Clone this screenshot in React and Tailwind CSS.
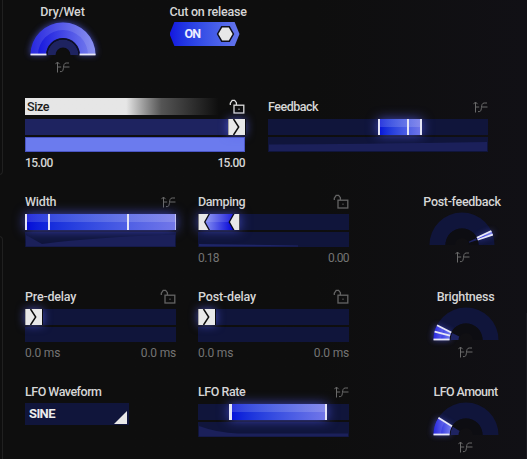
import React, { useId } from "react";
import clsx from "clsx";

const ModIcon = ({ className }) => (
  <svg
    width="15"
    height="12"
    viewBox="0 0 15 12"
    fill="none"
    stroke="currentColor"
    className={clsx("shrink-0 text-[#6a6a6a]", className)}
  >
    <path d="M2.5 11.5V1.2M0.4 3.2L2.5 1L4.6 3.2M2.5 6H6.2M9 6H14.5" />
    <path d="M5 10.6H6.3C9.8 10.6 7 2 11.2 2H14" />
  </svg>
);

const LockIcon = ({ active }) => (
  <svg
    width="16"
    height="15"
    viewBox="0 0 16 15"
    fill="none"
    stroke="currentColor"
    strokeWidth="1.3"
    className={clsx("shrink-0", active ? "text-[#dcdcdc]" : "text-[#646464]")}
  >
    <path d="M1.3 6V4.2L3.2 1.3H5.6L7.4 3.6V6" />
    <rect x="5" y="6.2" width="9.8" height="7.8" />
    <rect x="9.4" y="9.6" width="1.2" height="1.2" fill="currentColor" stroke="none" />
  </svg>
);

const Label = ({ children, className }) => (
  <span
    className={clsx(
      "block whitespace-nowrap text-[12.5px] font-medium leading-[17px]",
      className
    )}
  >
    {children}
  </span>
);

const Slider = ({ label, icon, wide, header, values, bright, track, shape, lower }) => (
  <div className={wide ? "w-[220px]" : "w-[151px]"}>
    <div className={clsx("flex h-[17px] items-center justify-between", header)}>
      {label}
      {icon}
    </div>
    <div className={clsx("mt-1 flex h-4", bright ? "bg-[#1e2360]" : "bg-[#10153b]")}>{track}</div>
    <div className={clsx("mt-0.5 h-[15px]", lower || "bg-[#10153b]")}>{shape}</div>
    {values && (
      <div
        className={clsx(
          "mt-0.5 flex h-[17px] items-center justify-between text-[12px]",
          bright ? "font-medium text-[#d6d6d6]" : "text-[#747474]"
        )}
      >
        {values.map((value, index) => (
          <span key={index} className={value.includes("ms") ? "tracking-[-0.2px]" : "tracking-[-0.6px]"}>
            {value}
          </span>
        ))}
      </div>
    )}
  </div>
);

const Thumb = ({ className }) => (
  <svg
    width="18"
    height="16"
    viewBox="0 0 18 16"
    className={clsx("shrink-0 shadow-[0_0_10px_rgba(90,100,240,0.7)]", className)}
  >
    <rect width="18" height="16" fill="#0a0a10" />
    <rect x="0.3" width="16.7" height="16" fill="#e8e8e8" />
    <path d="M5.5 0L10.7 8L5.5 16" fill="none" stroke="#0c0c0c" strokeWidth="1.5" />
  </svg>
);

// lit part of a track, brighter in the top half
const Fill = ({ className, children }) => (
  <div
    className={clsx(
      "flex h-4 bg-linear-to-r from-[#0505d8] to-[#7377e9] shadow-[0_0_12px_rgba(80,90,240,0.75)]",
      className
    )}
  >
    <div className="flex h-full w-full bg-linear-to-b from-white/15 from-50% to-transparent to-50%">
      {children}
    </div>
  </div>
);

const Mark = ({ className }) => (
  <i className={clsx("h-full shrink-0 bg-[#e4e4f6]", className || "w-0.5")} />
);

const point = (angle, radius) => {
  const rad = (angle * Math.PI) / 180;
  return [35 - radius * Math.cos(rad), 35 - radius * Math.sin(rad)];
};

const wedge = (from, to, inner, outer) => {
  const [ax, ay] = point(from, outer);
  const [bx, by] = point(to, outer);
  const [cx, cy] = point(to, inner);
  const [dx, dy] = point(from, inner);
  return `M${ax} ${ay}A${outer} ${outer} 0 0 1 ${bx} ${by}L${cx} ${cy}A${inner} ${inner} 0 0 0 ${dx} ${dy}Z`;
};

// angles run clockwise from the left end, 0 to 180
const Dial = ({ label, from, to, marks, className }) => {
  const id = useId();
  const full = to - from === 180;

  return (
    <div className={clsx("flex w-[70px] flex-col items-center", className)}>
      {label}
      <svg width="70" height="36" viewBox="0 0 70 36" className="overflow-visible">
        <defs>
          <linearGradient id={id}>
            <stop offset="0" stopColor="#0b0bdc" />
            <stop offset="1" stopColor="#7b83ef" />
          </linearGradient>
          <filter id={`${id}glow`} x="-60%" y="-60%" width="220%" height="220%">
            <feGaussianBlur stdDeviation="3.2" />
          </filter>
        </defs>
        <path d={wedge(0, 180, 16.5, 32.5)} fill="#10153b" />
        <path d={wedge(from, to, 16, 33)} fill="#5059e8" opacity="0.7" filter={`url(#${id}glow)`} />
        <path d={wedge(0, 180, 7, 16.5)} fill="#0d0d12" />
        <path d={wedge(from, to, 7.5, 15.5)} fill="#1e2360" />
        <path d={wedge(from, to, 16.5, 32.5)} fill={`url(#${id})`} />
        <path d={wedge(from, to, 25, 32.5)} fill="#fff" opacity="0.12" />
        {full && <path d={wedge(0, 180, 15.5, 17)} fill="#0c0e2a" />}
        {marks.map((angle) => {
          const lift = angle === 0 || angle === 180 ? 0.5 : 0;
          const [x1, y1] = point(angle, 16.5);
          const [x2, y2] = point(angle, 32.5);
          return (
            <line
              key={angle}
              x1={x1}
              y1={y1 - lift}
              x2={x2}
              y2={y2 - lift}
              stroke="#e8e8f6"
              strokeWidth="1.8"
            />
          );
        })}
      </svg>
      <ModIcon className="mt-[5px]" />
    </div>
  );
};

const Toggle = () => (
  <div className="w-[70px]">
    <Label className="tracking-[-0.22px] text-[#d6d6d6]">Cut on release</Label>
    <div className="mt-[2px] flex h-[24px] items-center justify-between bg-linear-to-r from-[#1515e0] to-[#6676ec] pr-[5px] pl-[15px] [clip-path:polygon(7%_0,93%_0,100%_50%,93%_100%,7%_100%,0_50%)]">
      <span className="text-[12.5px] font-bold tracking-[-0.9px] text-[#eeeeff]">ON</span>
      <svg width="19" height="18" viewBox="0 0 19 18">
        <path
          d="M5.7 1.8H13.3L17.4 9L13.3 16.2H5.7L1.6 9Z"
          fill="#e8e8e8"
          stroke="#10101c"
          strokeWidth="1.5"
        />
      </svg>
    </div>
  </div>
);

const Select = () => (
  <div className="w-[104px]">
    <div className="flex h-[17px] items-center">
      <Label className="tracking-[-0.5px] text-[#d6d6d6]">LFO Waveform</Label>
    </div>
    <div className="mt-[3px] flex h-[22px] items-end justify-between bg-[#10153b] pr-[2px] pb-px pl-1">
      <span className="text-[13px] leading-5 font-bold tracking-[-0.6px] text-[#ececec]">SINE</span>
      <svg width="13" height="13" viewBox="0 0 13 13">
        <path d="M13 0V13H0Z" fill="#e8e8e8" />
      </svg>
    </div>
  </div>
);

const App = () => {
  return (
    <div className="relative h-[459px] w-[527px] overflow-hidden bg-linear-to-r from-[#0e0e0e] from-60% to-[#111015] pt-[3px] font-['Roboto',sans-serif]">
      <div className="absolute top-[-8px] left-[-8px] h-[183px] w-[11px] rounded-br-[4px] border-r border-b border-[#202020]" />
      <div className="absolute top-[236px] left-[-8px] h-[240px] w-[11px] rounded-tr-[4px] border-t border-r border-[#202020]" />
      <div className="absolute top-[313px] right-0 h-[146px] w-px bg-[#1b1a20]" />

      <div className="flex h-[95px]">
        <Dial
          className="ml-[27.5px]"
          label={<Label className="tracking-[-0.15px] text-[#d6d6d6]">Dry/Wet</Label>}
          from={0}
          to={180}
          marks={[0, 180]}
        />
        <div className="ml-[72px]">
          <Toggle />
        </div>
      </div>

      <div className="flex h-[95px] gap-[23px] pl-[25px]">
        <Slider
          wide
          bright
          header="bg-linear-to-r from-[#e6e6e6] from-46% via-[#555] via-62% to-transparent to-88% pl-[2px]"
          label={<Label className="tracking-[-0.4px] text-[#1c1c1c]">Size</Label>}
          icon={<LockIcon active />}
          track={<Thumb className="ml-[203px]" />}
          lower="border border-[#4a55c4] bg-[#6b7bee]"
          values={["15.00", "15.00"]}
        />
        <Slider
          wide
          label={<Label className="tracking-[-0.5px] text-[#d6d6d6]">Feedback</Label>}
          icon={<ModIcon />}
          track={
            <Fill className="ml-[110px] w-[44px]">
              <Mark />
              <Mark className="ml-[27px] w-0.5" />
              <Mark className="ml-auto w-0.5" />
            </Fill>
          }
          shape={
            <svg width="220" height="15">
              <path d="M1 7.5Q90 7 219 5V14H1Z" fill="#1b205a" />
            </svg>
          }
        />
      </div>

      <div className="flex h-[95px] pl-[25px]">
        <Slider
          label={<Label className="tracking-[-0.2px] text-[#d6d6d6]">Width</Label>}
          icon={<ModIcon />}
          track={
            <Fill className="w-full">
              <Mark />
              <Mark className="ml-[21px] w-0.5" />
              <Mark className="ml-[77px] w-0.5" />
              <Mark className="ml-auto w-px opacity-60" />
            </Fill>
          }
          shape={
            <svg width="151" height="15">
              <path d="M1 3L17 12Q70 5 150 2.5V14.5H1Z" fill="#1b205a" />
            </svg>
          }
        />
        <div className="ml-[22px]">
          <Slider
            label={<Label className="tracking-[-0.4px] text-[#d6d6d6]">Damping</Label>}
            icon={<LockIcon />}
            track={
              <svg width="42" height="16" className="shadow-[0_0_12px_rgba(80,90,240,0.7)]">
                <defs>
                  <linearGradient id="damping">
                    <stop offset="0.1" stopColor="#767fee" />
                    <stop offset="1" stopColor="#0505d8" />
                  </linearGradient>
                </defs>
                <rect width="42" height="16" fill="#0a0a18" />
                <path d="M0.5 0H10.5L6 8L10.5 16H0.5Z" fill="#e8e8e8" />
                <path d="M12 0H35L30.5 8L35 16H12L7.5 8Z" fill="url(#damping)" />
                <path d="M12 0H35L30.5 8H7.5Z" fill="#fff" opacity="0.12" />
                <path d="M36.5 0H41.3V16H36.5L32 8Z" fill="#e8e8e8" />
              </svg>
            }
            shape={
              <svg width="151" height="15">
                <path d="M1 12L100 13.5V14.5H1Z" fill="#1e2568" />
              </svg>
            }
            values={["0.18", "0.00"]}
          />
        </div>
        <Dial
          className="ml-[78px]"
          label={<Label className="tracking-[-0.3px] text-[#d6d6d6]">Post-feedback</Label>}
          from={154}
          to={162}
          marks={[154.5, 161.5]}
        />
      </div>

      <div className="flex h-[95px] pl-[25px]">
        <Slider
          label={<Label className="tracking-[-0.2px] text-[#d6d6d6]">Pre-delay</Label>}
          icon={<LockIcon />}
          track={<Thumb />}
          values={["0.0 ms", "0.0 ms"]}
        />
        <div className="ml-[22px]">
          <Slider
            label={<Label className="tracking-[-0.15px] text-[#d6d6d6]">Post-delay</Label>}
            icon={<LockIcon />}
            track={<Thumb />}
            values={["0.0 ms", "0.0 ms"]}
          />
        </div>
        <Dial
          className="ml-[81.5px]"
          label={<Label className="tracking-[-0.25px] text-[#d6d6d6]">Brightness</Label>}
          from={0}
          to={27}
          marks={[0, 15, 27]}
        />
      </div>

      <div className="flex h-[95px] pl-[25px]">
        <Select />
        <div className="ml-[69px]">
          <Slider
            label={<Label className="tracking-[-0.45px] text-[#d6d6d6]">LFO Rate</Label>}
            icon={<ModIcon />}
            track={
              <Fill className="ml-[31px] w-[98px]">
                <Mark className="w-[3px]" />
                <Mark className="ml-auto w-0.5" />
              </Fill>
            }
            shape={
              <svg width="151" height="15">
                <path d="M1 4Q20 11 40 11.5H150V14.5H1Z" fill="#1b205a" />
              </svg>
            }
          />
        </div>
        <Dial
          className="ml-[81.5px]"
          label={<Label className="tracking-[-0.55px] text-[#d6d6d6]">LFO Amount</Label>}
          from={0}
          to={32}
          marks={[0, 32]}
        />
      </div>
    </div>
  );
};

export default App;
